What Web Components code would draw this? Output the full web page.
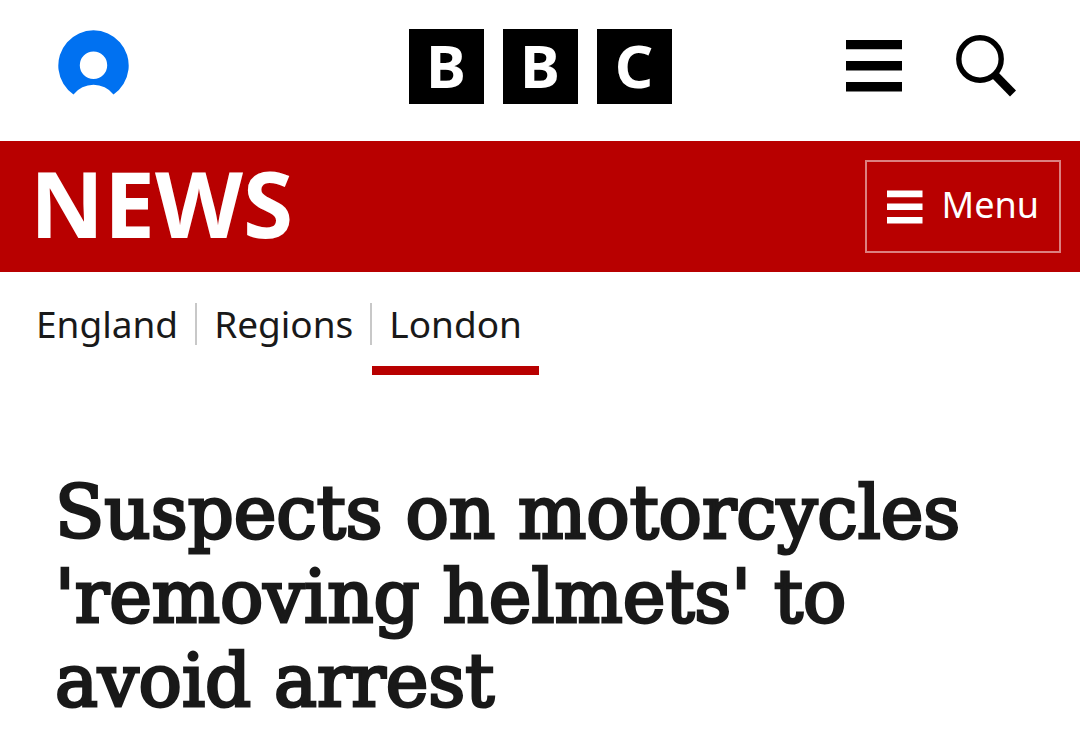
<!DOCTYPE html>
<html lang="en-GB">
<head>
<meta charset="utf-8">
<meta name="viewport" content="width=device-width, initial-scale=1">
<title>Suspects on motorcycles 'removing helmets' to avoid arrest - BBC News</title>
<style>
  body {
    margin: 0;
    background: #fff;
    color: #191919;
    font-family: "Noto Sans", sans-serif;
    --news-red: #b80000;
  }
</style>
</head>
<body>
  <site-header></site-header>
  <news-bar>NEWS</news-bar>
  <section-nav>
    <section-link href="#england">England</section-link>
    <section-link href="#regions">Regions</section-link>
    <section-link href="#london" current>London</section-link>
  </section-nav>
  <main>
    <story-headline>Suspects on motorcycles 'removing helmets' to avoid arrest</story-headline>
  </main>

<script>
class SiteHeader extends HTMLElement {
  connectedCallback() {
    this.attachShadow({ mode: 'open' });
    this.shadowRoot.innerHTML = `
      <style>
        :host {
          display: block;
        }

        header {
          display: grid;
          grid-template-columns: 1fr auto 1fr;
          align-items: start;
          padding: 29px 58px 37px;
        }

        a {
          color: inherit;
          text-decoration: none;
        }

        button {
          display: block;
          padding: 0;
          border: none;
          background: none;
          color: #000;
          cursor: pointer;
        }

        svg {
          display: block;
        }

        .account {
          justify-self: start;
        }

        .logo {
          display: flex;
          gap: 19px;
        }

        .logo span {
          width: 75px;
          height: 75px;
          background: #000;
          color: #fff;
          font-size: 60px;
          font-weight: 700;
          line-height: 72px;
          text-align: center;
        }

        .tools {
          display: flex;
          gap: 54px;
          justify-self: end;
        }
      </style>

      <header>
        <a class="account" href="#account" aria-label="Your account">
          <svg width="71" height="75" viewBox="0 0 71 75">
            <path fill="#0071f1" fill-rule="evenodd" d="M15.5 65.5A35.2 35.2 0 1 1 55.5 65.5A25.5 25.5 0 0 0 15.5 65.5ZM35.5 22.6a13.7 13.7 0 1 0 0 27.4a13.7 13.7 0 1 0 0-27.4Z"/>
          </svg>
        </a>
        <a class="logo" href="#home" aria-label="BBC"><span>B</span><span>B</span><span>C</span></a>
        <div class="tools">
          <button type="button" aria-label="More menu">
            <svg width="56" height="75" viewBox="0 0 56 75">
              <path d="M0 11h56v9.3H0zM0 32h56v9.5H0zM0 53h56v9.5H0z"/>
            </svg>
          </button>
          <button type="button" aria-label="Search">
            <svg width="66" height="75" viewBox="0 0 66 75">
              <circle cx="24" cy="30" r="21.2" fill="none" stroke="#000" stroke-width="5.4"/>
              <path d="M37.5 44.5L57 64.5" stroke="#000" stroke-width="8.4"/>
            </svg>
          </button>
        </div>
      </header>
    `;
  }
}

class NewsBar extends HTMLElement {
  connectedCallback() {
    this.attachShadow({ mode: 'open' });
    this.shadowRoot.innerHTML = `
      <style>
        :host {
          display: flex;
          align-items: center;
          justify-content: space-between;
          padding: 19px 19px 19px 30px;
          background: var(--news-red);
          color: #fff;
        }

        .brand {
          padding-bottom: 8px;
          color: inherit;
          font-size: 91px;
          font-weight: 700;
          line-height: 84px;
          text-decoration: none;
        }

        button {
          display: flex;
          align-items: center;
          gap: 19px;
          height: 93px;
          padding: 0 20px;
          border: 2px solid rgba(255, 255, 255, 0.5);
          background: none;
          color: inherit;
          font: inherit;
          font-size: 36px;
          line-height: 42px;
          cursor: pointer;
        }

        button span {
          padding-bottom: 3px;
        }
      </style>

      <a class="brand" href="#news"><slot></slot></a>
      <button type="button">
        <svg width="36" height="34" viewBox="0 0 36 34" aria-hidden="true">
          <path fill="#fff" d="M0 .5h35.5v6.7H0zM0 13.5h35.5v6.5H0zM0 27h35.5v6.5H0z"/>
        </svg>
        <span>Menu</span>
      </button>
    `;
  }
}

class SectionNav extends HTMLElement {
  connectedCallback() {
    this.attachShadow({ mode: 'open' });
    this.shadowRoot.innerHTML = `
      <style>
        :host {
          display: block;
        }

        nav {
          display: flex;
          padding: 31px 19px 0;
        }
      </style>

      <nav aria-label="Sections"><slot></slot></nav>
    `;
  }
}

class SectionLink extends HTMLElement {
  connectedCallback() {
    const current = this.hasAttribute('current');
    this.attachShadow({ mode: 'open' });
    this.shadowRoot.innerHTML = `
      <style>
        :host {
          display: block;
        }

        a {
          display: block;
          padding: 0 17px;
          border-right: 2px solid #c8c8c8;
          color: inherit;
          font-size: 37px;
          line-height: 42px;
          text-decoration: none;
        }

        a[aria-current] {
          padding-bottom: 21px;
          border-right: none;
          border-bottom: 9px solid var(--news-red);
        }
      </style>

      <a href="${this.getAttribute('href')}" ${current ? 'aria-current="page"' : ''}><slot></slot></a>
    `;
  }
}

class StoryHeadline extends HTMLElement {
  connectedCallback() {
    this.attachShadow({ mode: 'open' });
    this.shadowRoot.innerHTML = `
      <style>
        :host {
          display: block;
          padding: 96px 55px 36px;
        }

        h1 {
          margin: 0;
          font-family: "DejaVu Serif", serif;
          font-size: 72px;
          font-weight: 400;
          line-height: 84px;
          -webkit-text-stroke: 3px currentColor;
        }
      </style>

      <h1><slot></slot></h1>
    `;
  }
}

customElements.define('site-header', SiteHeader);
customElements.define('news-bar', NewsBar);
customElements.define('section-nav', SectionNav);
customElements.define('section-link', SectionLink);
customElements.define('story-headline', StoryHeadline);
</script>
</body>
</html>
